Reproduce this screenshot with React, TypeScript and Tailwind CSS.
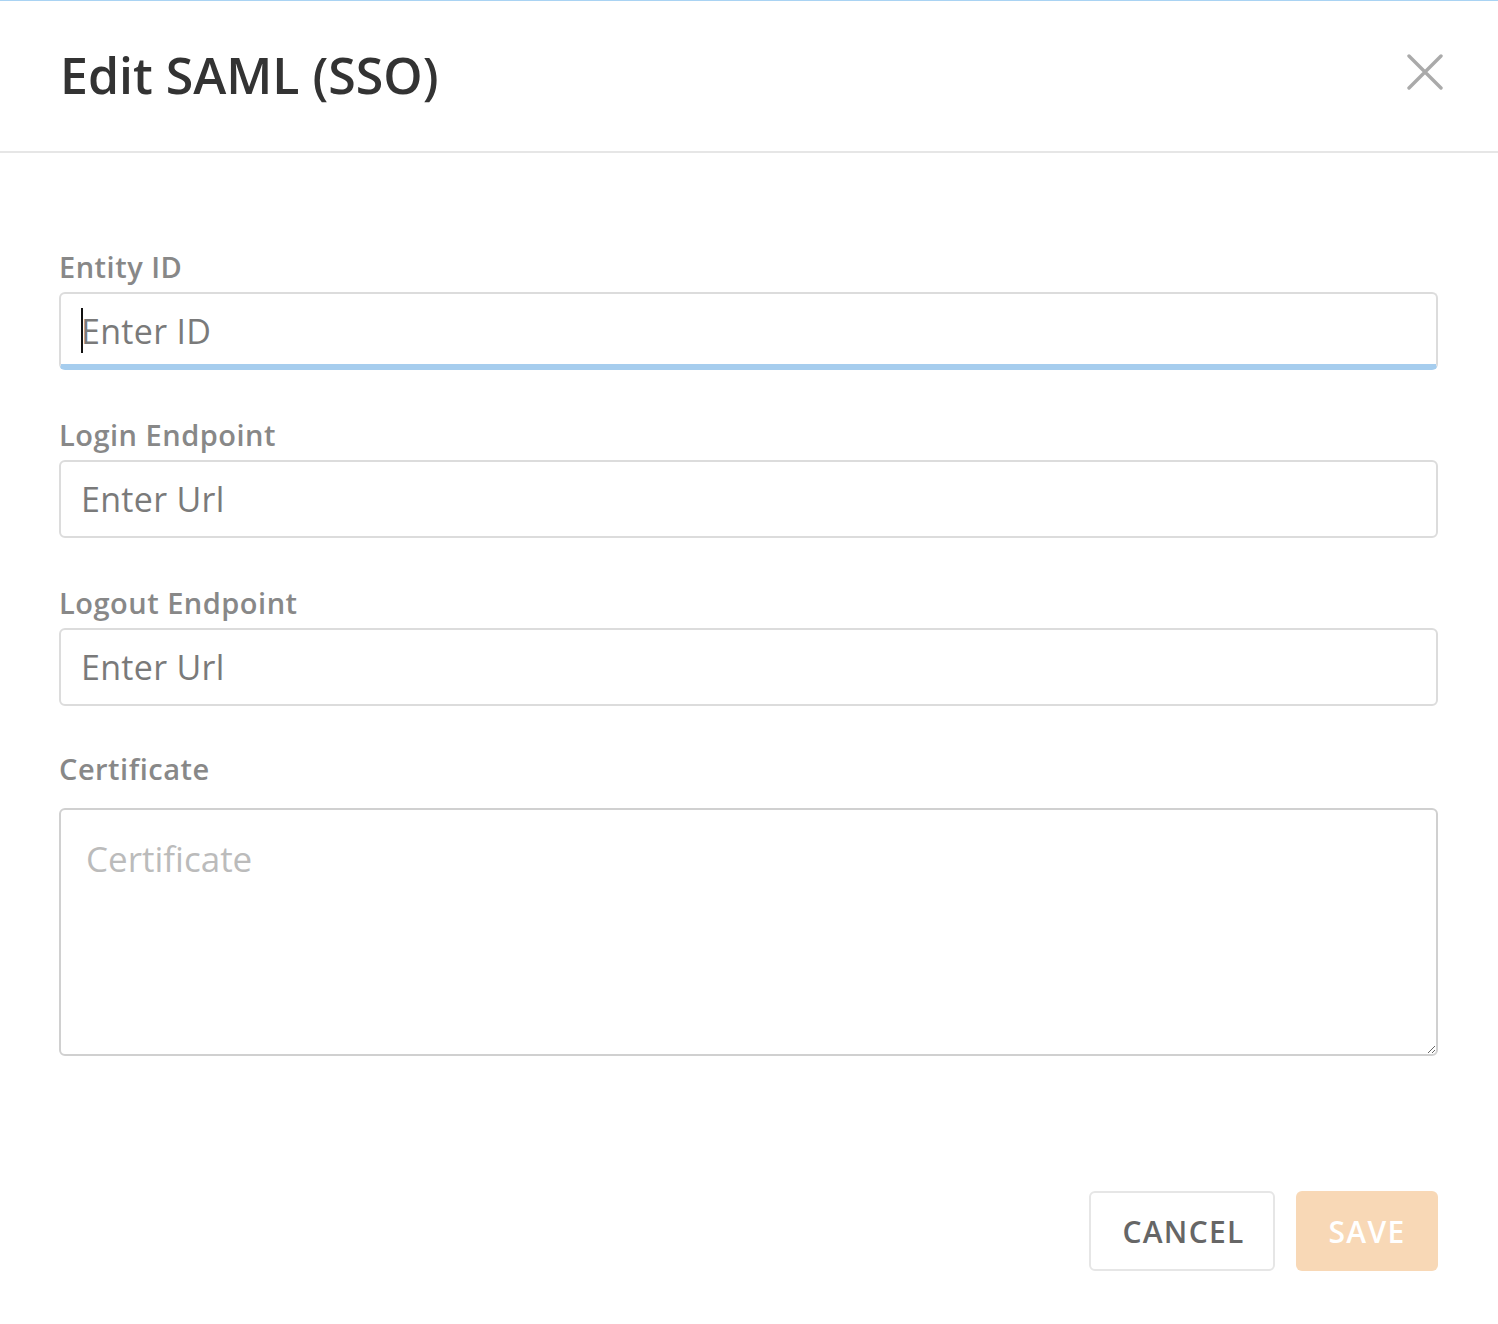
import { useState } from "react";

type Field = {
  id: string;
  label: string;
  placeholder: string;
};

const fields: Field[] = [
  { id: "entity", label: "Entity ID", placeholder: "Enter ID" },
  { id: "login", label: "Login Endpoint", placeholder: "Enter Url" },
  { id: "logout", label: "Logout Endpoint", placeholder: "Enter Url" },
];

const CloseIcon = () => (
  <svg width="36" height="36" viewBox="0 0 36 36" fill="none">
    <path d="M2 2L34 34M34 2L2 34" stroke="#aaaaaa" strokeWidth="3.4" strokeLinecap="round" />
  </svg>
);

export default function App() {
  const [values, setValues] = useState<Record<string, string>>({ entity: "", login: "", logout: "", cert: "" });

  const update = (id: string, value: string) => setValues((v) => ({ ...v, [id]: value }));

  return (
    <div className="min-h-[1324px] w-full bg-white border-t border-[#a9d3f3] font-['Open_Sans',sans-serif]">
      <header className="h-[152px] flex items-center justify-between pl-[60px] pr-[55px] border-b-2 border-[#e6e6e6]">
        <h1 className="text-[50px] leading-[60px] font-semibold text-[#333333] -mt-[2px]">Edit SAML (SSO)</h1>
        <button className="-mt-[8px] p-0" aria-label="Close">
          <CloseIcon />
        </button>
      </header>

      <div className="pl-[59px] pr-[60px] pt-[94px]">
        {fields.map((field, idx) => (
          <div key={field.id} className={idx === 0 ? "" : "mt-[45px]"}>
            <label className="block text-[29px] leading-[40px] font-semibold tracking-[0.5px] text-[#888888] mb-[5px]">
              {field.label}
            </label>
            <div className="relative">
              <input
                value={values[field.id]}
                onChange={(e) => update(field.id, e.target.value)}
                placeholder={field.placeholder}
                className={
                  idx === 0
                    ? "w-full h-[78px] rounded-[6px] border-2 border-[#dcdcdc] border-b-[6px] border-b-[#a6cdee] pl-[20px] pt-[3px] text-[34px] tracking-[0.3px] text-[#555] placeholder:text-[#7a7a7a] outline-none"
                    : "w-full h-[78px] rounded-[6px] border-2 border-[#dcdcdc] pl-[20px] text-[34px] tracking-[0.3px] text-[#555] placeholder:text-[#7a7a7a] outline-none"
                }
              />
              {idx === 0 && values.entity === "" && (
                <span className="absolute left-[22px] top-[16px] w-[2px] h-[45px] bg-[#111]" />
              )}
            </div>
          </div>
        ))}

        <div className="mt-[43px]">
          <label className="block text-[29px] leading-[40px] font-semibold tracking-[0.5px] text-[#888888] mb-[19px]">Certificate</label>
          <textarea
            value={values.cert}
            onChange={(e) => update("cert", e.target.value)}
            placeholder="Certificate"
            className="block w-full h-[248px] rounded-[6px] border-2 border-[#d0d0d0] px-[25px] pt-[26px] text-[35px] leading-[46px] text-[#555] placeholder:text-[#bbbbbb] outline-none"
          />
        </div>

        <div className="flex justify-end gap-[21px] mt-[135px]">
          <button className="w-[186px] h-[80px] rounded-[6px] border-2 border-[#e6e6e6] bg-white text-[30px] font-semibold tracking-[1.3px] text-[#666666] pl-[3px]">
            CANCEL
          </button>
          <button className="w-[142px] h-[80px] rounded-[6px] bg-[#f8d8b6] text-[30px] font-semibold tracking-[1.3px] text-white">
            SAVE
          </button>
        </div>
      </div>
    </div>
  );
}
